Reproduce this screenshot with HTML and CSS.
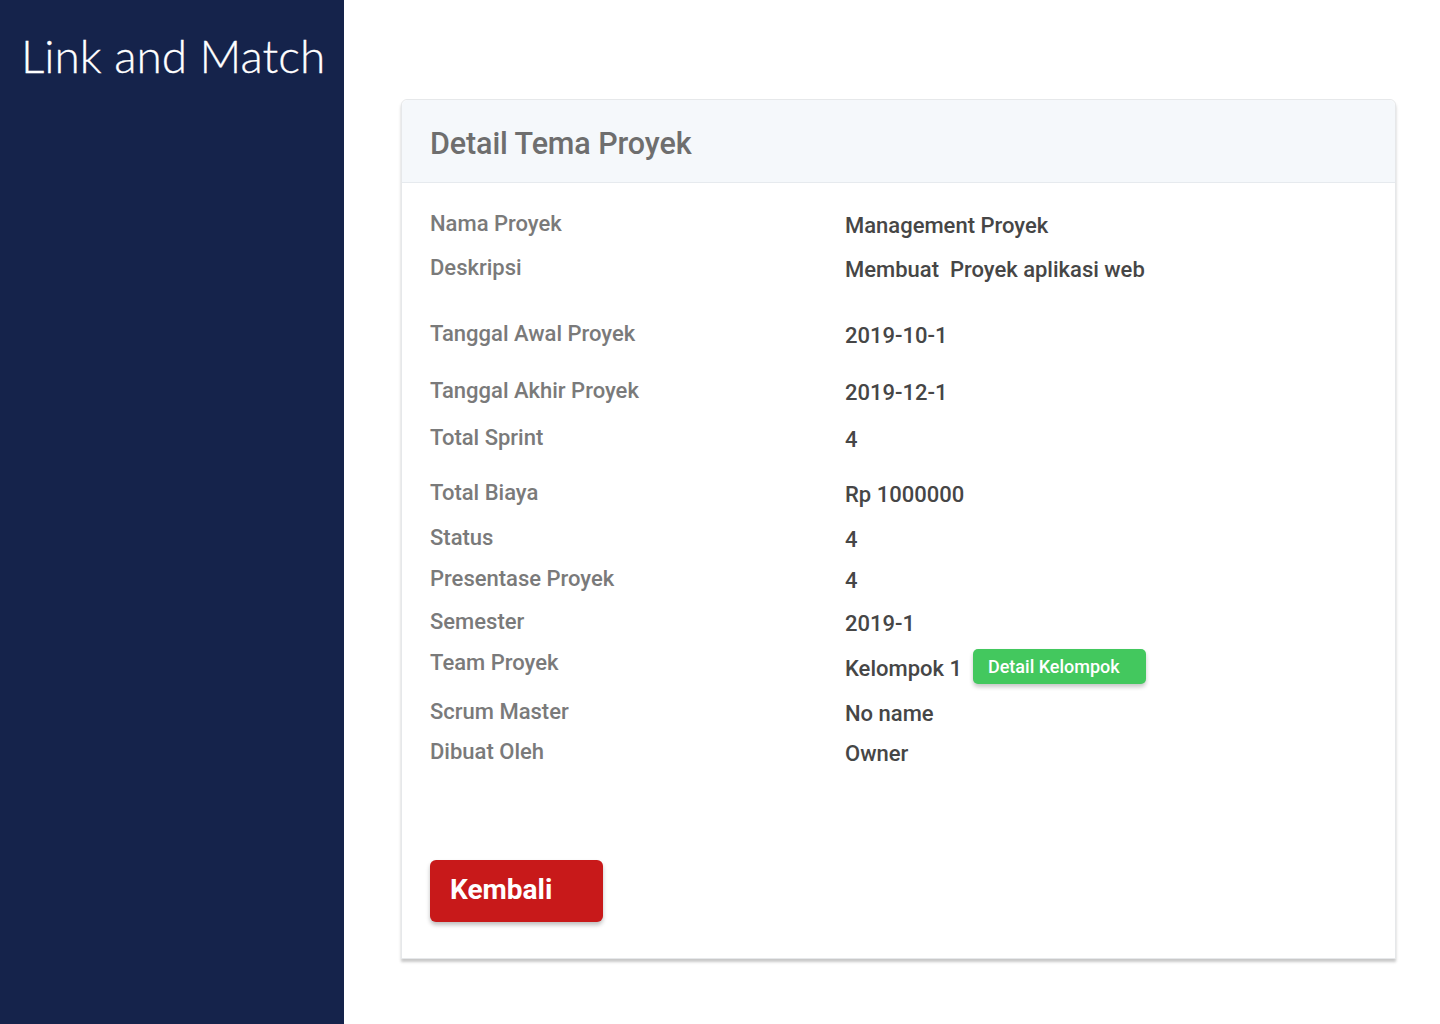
FILE: index.html
```html
<!DOCTYPE html>
<html lang="id">
<head>
<meta charset="utf-8">
<title>Detail Tema Proyek</title>
<link rel="stylesheet" href="styles.css">
</head>
<body>
<div class="layout">
  <aside class="sidebar">
    <div class="brand">Link and Match</div>
  </aside>
  <main class="main">
    <section class="card">
      <header class="card-head">
        <h1 class="card-title">Detail Tema Proyek</h1>
      </header>
      <div class="card-body">
        <div class="row h44"><div class="label">Nama Proyek</div><div class="value">Management Proyek</div></div>
        <div class="row h66"><div class="label">Deskripsi</div><div class="value">Membuat&nbsp; Proyek aplikasi web</div></div>
        <div class="row h57"><div class="label">Tanggal Awal Proyek</div><div class="value">2019-10-1</div></div>
        <div class="row h47"><div class="label">Tanggal Akhir Proyek</div><div class="value">2019-12-1</div></div>
        <div class="row h55"><div class="label">Total Sprint</div><div class="value">4</div></div>
        <div class="row h45"><div class="label">Total Biaya</div><div class="value">Rp 1000000</div></div>
        <div class="row h41"><div class="label">Status</div><div class="value">4</div></div>
        <div class="row h43"><div class="label">Presentase Proyek</div><div class="value">4</div></div>
        <div class="row h41"><div class="label">Semester</div><div class="value">2019-1</div></div>
        <div class="row h49"><div class="label">Team Proyek</div><div class="value value-team"><span>Kelompok 1</span><button class="btn-green" type="button">Detail Kelompok</button></div></div>
        <div class="row h40"><div class="label">Scrum Master</div><div class="value">No name</div></div>
        <div class="row"><div class="label">Dibuat Oleh</div><div class="value">Owner</div></div>
        <div class="actions">
          <button class="btn-red" type="button">Kembali</button>
        </div>
      </div>
    </section>
  </main>
</div>
</body>
</html>
```
FILE: styles.css
```css
* { box-sizing: border-box; }
html, body { margin: 0; padding: 0; background: #ffffff; }
body { font-family: Roboto, "Liberation Sans", sans-serif; }

.layout { display: flex; min-height: 1024px; }

.sidebar {
  width: 344px;
  flex: 0 0 344px;
  background: #15234b;
  padding: 29px 0 0 21px;
}
.brand {
  font-family: Lato, "Open Sans", sans-serif;
  font-weight: 300;
  font-size: 46px;
  line-height: 54px;
  color: #ffffff;
  letter-spacing: 0;
  white-space: nowrap;
  -webkit-text-stroke: 0.3px #ffffff;
}

.main {
  flex: 1;
  padding: 99px 44px 0 57px;
}

.card {
  width: 995px;
  background: #ffffff;
  border: 1px solid #e6e8ea;
  border-radius: 6px 6px 0 0;
  box-shadow: 0 3px 3px rgba(0, 0, 0, 0.22);
}
.card-head {
  height: 83px;
  background: #f5f8fb;
  border-bottom: 1px solid #e6eaee;
  border-radius: 6px 6px 0 0;
  display: flex;
  align-items: center;
  padding: 5px 0 0 28px;
}
.card-title {
  margin: 0;
  font-size: 30.5px;
  font-weight: 500;
  color: #6e6e6e;
  letter-spacing: -0.1px;
}

.card-body {
  padding: 29px 28px 36px 28px;
}
.row {
  display: flex;
  align-items: flex-start;
}
.h40 { height: 40px; }
.h41 { height: 41px; }
.h43 { height: 43px; }
.h44 { height: 44px; }
.h45 { height: 45px; }
.h47 { height: 47px; }
.h49 { height: 49px; }
.h55 { height: 55px; }
.h57 { height: 57px; }
.h66 { height: 66px; }

.label {
  width: 415px;
  flex: 0 0 415px;
  font-size: 22px;
  line-height: 24px;
  font-weight: 500;
  color: #7a7a7a;
}
.value {
  font-size: 22px;
  line-height: 24px;
  font-weight: 500;
  color: #464646;
  padding-top: 2px;
}
.value-team {
  display: flex;
  align-items: center;
  margin-top: -2px;
  padding-top: 0;
}
.value-team span { padding-top: 4px; }

.btn-green {
  margin-left: 11px;
  width: 173px;
  height: 35px;
  border: none;
  border-radius: 5px;
  background: #43c85e;
  color: #ffffff;
  font-family: Roboto, "Liberation Sans", sans-serif;
  font-size: 18px;
  font-weight: 500;
  text-align: left;
  padding: 0 0 0 15px;
  box-shadow: 0 3px 4px rgba(0, 0, 0, 0.22);
}

.actions {
  padding-top: 94px;
}
.btn-red {
  width: 173px;
  height: 62px;
  border: none;
  border-radius: 6px;
  background: #c8191a;
  color: #ffffff;
  font-family: Roboto, "Liberation Sans", sans-serif;
  font-size: 28px;
  font-weight: 700;
  text-align: left;
  padding: 0 0 4px 20px;
  box-shadow: 0 3px 4px rgba(0, 0, 0, 0.25);
}
```
